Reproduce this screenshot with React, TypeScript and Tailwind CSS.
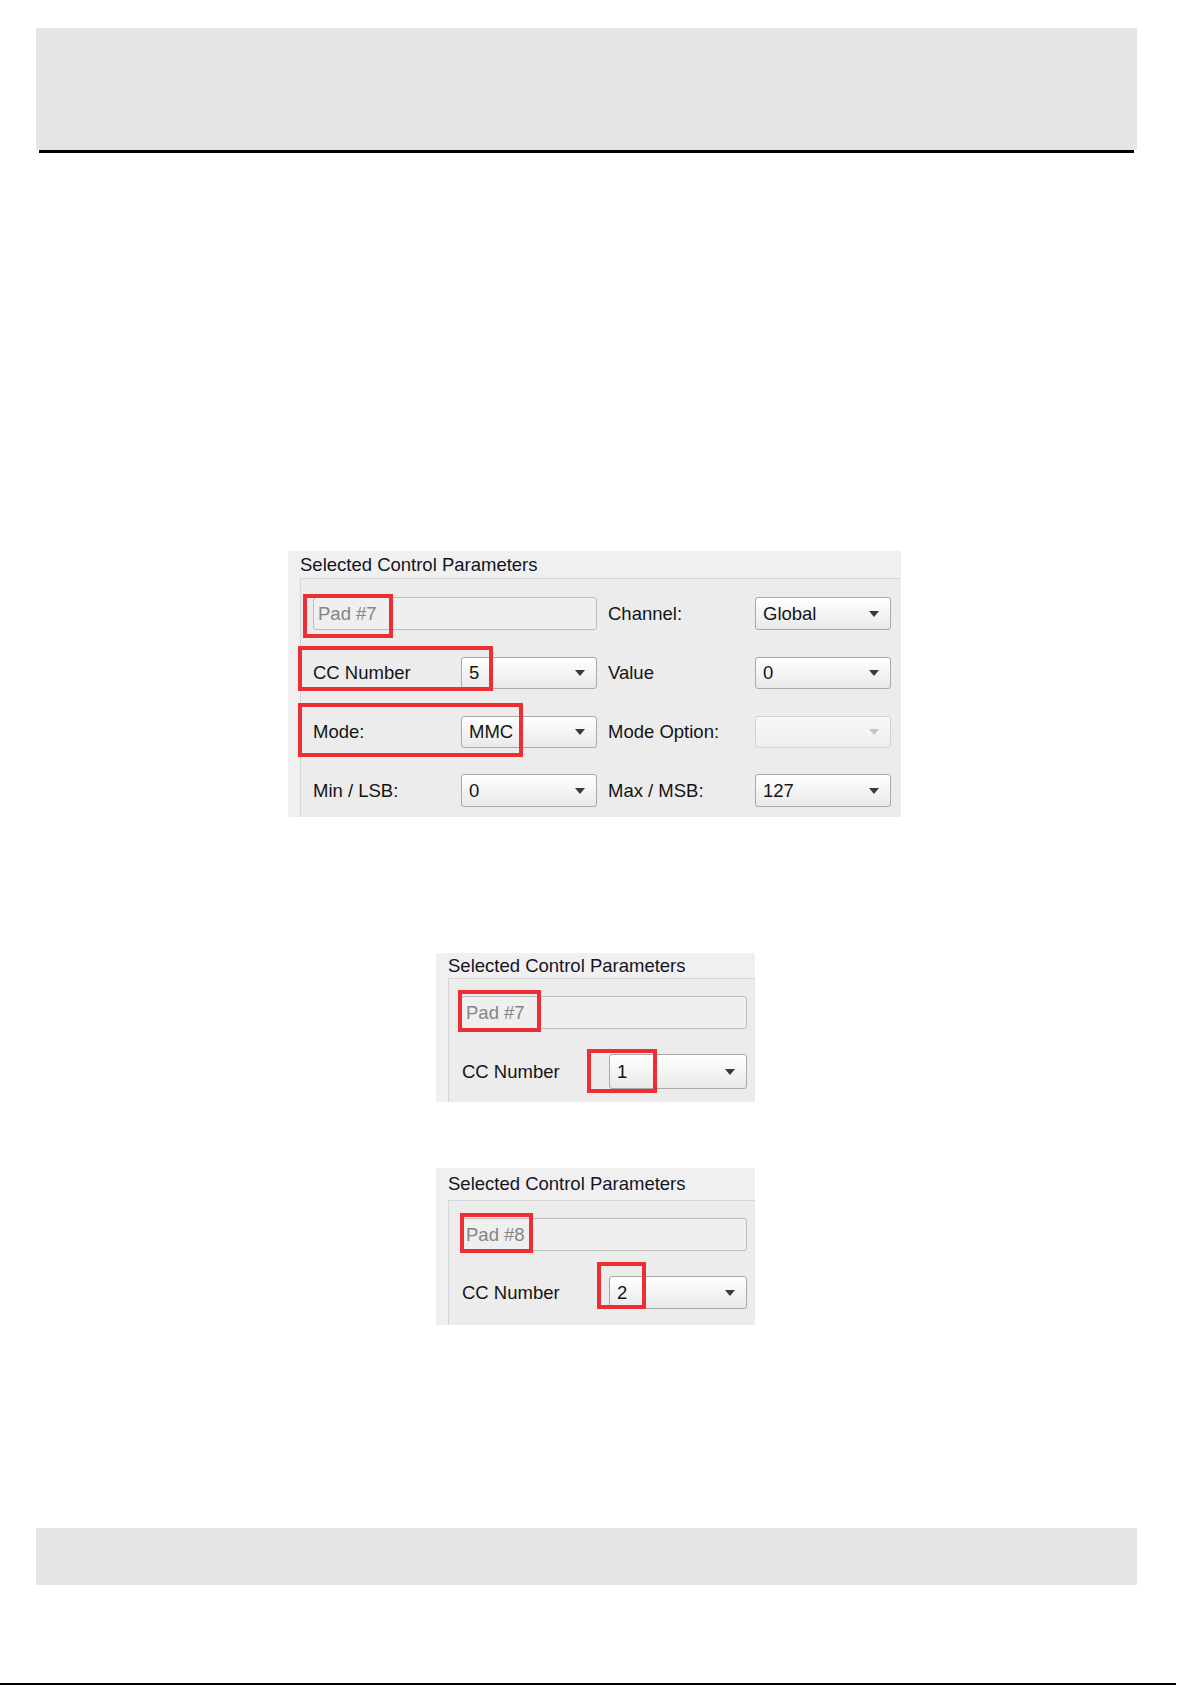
import React from "react";

const FONT = { fontFamily: '"Liberation Sans", Arial, sans-serif' };

function Arrow({ disabled }: { disabled?: boolean }) {
  return (
    <svg width="10" height="6" viewBox="0 0 10 6" className="mr-[11px] shrink-0">
      <path d="M0 0 L10 0 L5 6 Z" fill={disabled ? "#c4c4c4" : "#3a3a3a"} />
    </svg>
  );
}

function Dropdown({ value, w, h = 33, disabled }: { value?: string; w: number; h?: number; disabled?: boolean }) {
  return (
    <div
      className={
        "flex items-center justify-between rounded-[3px] border shrink-0 " +
        (disabled
          ? "border-[#d2d2d2] bg-gradient-to-b from-[#f8f8f8] to-[#efefef]"
          : "border-[#a9a9a9] bg-gradient-to-b from-[#ffffff] to-[#e9e9e9]")
      }
      style={{ width: w, height: h }}
    >
      <span className="pl-[7px] text-[#141414]">{value}</span>
      <Arrow disabled={disabled} />
    </div>
  );
}

function TextField({ value, w }: { value: string; w: number }) {
  return (
    <div
      className="flex items-center h-[33px] rounded-[3px] border border-[#bdbdbd] bg-[#efefef] shrink-0"
      style={{ width: w }}
    >
      <span className="pl-[4px] text-[#858585]">{value}</span>
    </div>
  );
}

function RedBox({ l, t, w, h }: { l: number; t: number; w: number; h: number }) {
  return (
    <div
      className="absolute border-[4px] border-[#ec2f35]"
      style={{ left: l, top: t, width: w, height: h }}
    />
  );
}

function Label({ text, w }: { text: string; w: number }) {
  return (
    <div className="shrink-0 text-[#141414]" style={{ width: w }}>
      {text}
    </div>
  );
}

function BigPanel() {
  return (
    <div className="relative ml-[288px] mt-[398px] w-[613px] h-[266px] bg-[#f0f0f0] overflow-hidden text-[18.5px]">
      <div className="h-[27px] leading-[27px] pl-[12px] text-[#141424]">Selected Control Parameters</div>
      <div className="ml-[12px] h-[260px] border-l border-t border-[#d6d6d6] bg-[#ececec] pt-[18px] pl-[12px] flex flex-col gap-[26px]">
        <div className="flex items-center h-[33px]">
          <TextField value="Pad #7" w={284} />
          <div className="w-[11px] shrink-0" />
          <Label text="Channel:" w={147} />
          <Dropdown value="Global" w={136} />
        </div>
        <div className="flex items-center h-[33px]">
          <Label text="CC Number" w={148} />
          <Dropdown value="5" w={136} h={32} />
          <div className="w-[11px] shrink-0" />
          <Label text="Value" w={147} />
          <Dropdown value="0" w={136} h={32} />
        </div>
        <div className="flex items-center h-[33px]">
          <Label text="Mode:" w={148} />
          <Dropdown value="MMC" w={136} h={32} />
          <div className="w-[11px] shrink-0" />
          <Label text="Mode Option:" w={147} />
          <Dropdown value="" w={136} h={32} disabled />
        </div>
        <div className="flex items-center h-[33px]">
          <Label text="Min / LSB:" w={148} />
          <Dropdown value="0" w={136} />
          <div className="w-[11px] shrink-0" />
          <Label text="Max / MSB:" w={147} />
          <Dropdown value="127" w={136} />
        </div>
      </div>
      <RedBox l={15} t={43} w={90} h={44} />
      <RedBox l={10} t={95} w={195} h={45} />
      <RedBox l={10} t={152} w={225} h={54} />
    </div>
  );
}

function SmallPanel({
  mt,
  titleH,
  height,
  pad,
  cc,
  ddH,
  boxes,
}: {
  mt: number;
  titleH: number;
  height: number;
  pad: string;
  cc: string;
  ddH: number;
  boxes: { l: number; t: number; w: number; h: number }[];
}) {
  return (
    <div
      className="relative ml-[436px] w-[319px] bg-[#f0f0f0] overflow-hidden text-[18.5px]"
      style={{ marginTop: mt, height }}
    >
      <div className="pl-[12px] text-[#141424] flex items-center" style={{ height: titleH }}>
        Selected Control Parameters
      </div>
      <div className="ml-[12px] h-[200px] border-l border-t border-[#d6d6d6] bg-[#ececec] pt-[17px] pl-[12px] flex flex-col gap-[25px]">
        <div className="flex items-center h-[33px]">
          <TextField value={pad} w={286} />
        </div>
        <div className="flex items-center" style={{ height: ddH }}>
          <div className="pl-[1px] shrink-0 w-[148px] text-[#141414]">CC Number</div>
          <Dropdown value={cc} w={138} h={ddH} />
        </div>
      </div>
      {boxes.map((b, i) => (
        <RedBox key={i} {...b} />
      ))}
    </div>
  );
}

export default function App() {
  return (
    <div className="w-[1192px] h-[1685px] bg-white flex flex-col overflow-hidden" style={FONT}>
      <div className="mt-[28px] ml-[36px] w-[1101px] h-[122px] bg-[#e5e5e5] shrink-0" />
      <div className="ml-[39px] w-[1095px] h-[3px] bg-black shrink-0" />
      <BigPanel />
      <SmallPanel
        mt={136}
        titleH={25}
        height={149}
        pad="Pad #7"
        cc="1"
        ddH={35}
        boxes={[
          { l: 22, t: 37, w: 83, h: 42 },
          { l: 151, t: 96, w: 70, h: 44 },
        ]}
      />
      <SmallPanel
        mt={66}
        titleH={32}
        height={157}
        pad="Pad #8"
        cc="2"
        ddH={33}
        boxes={[
          { l: 24, t: 45, w: 73, h: 40 },
          { l: 161, t: 94, w: 49, h: 47 },
        ]}
      />
      <div className="mt-[203px] ml-[36px] w-[1101px] h-[57px] bg-[#e5e5e5] shrink-0" />
      <div className="mt-[98px] h-[2px] w-[1176px] bg-black shrink-0" />
    </div>
  );
}
